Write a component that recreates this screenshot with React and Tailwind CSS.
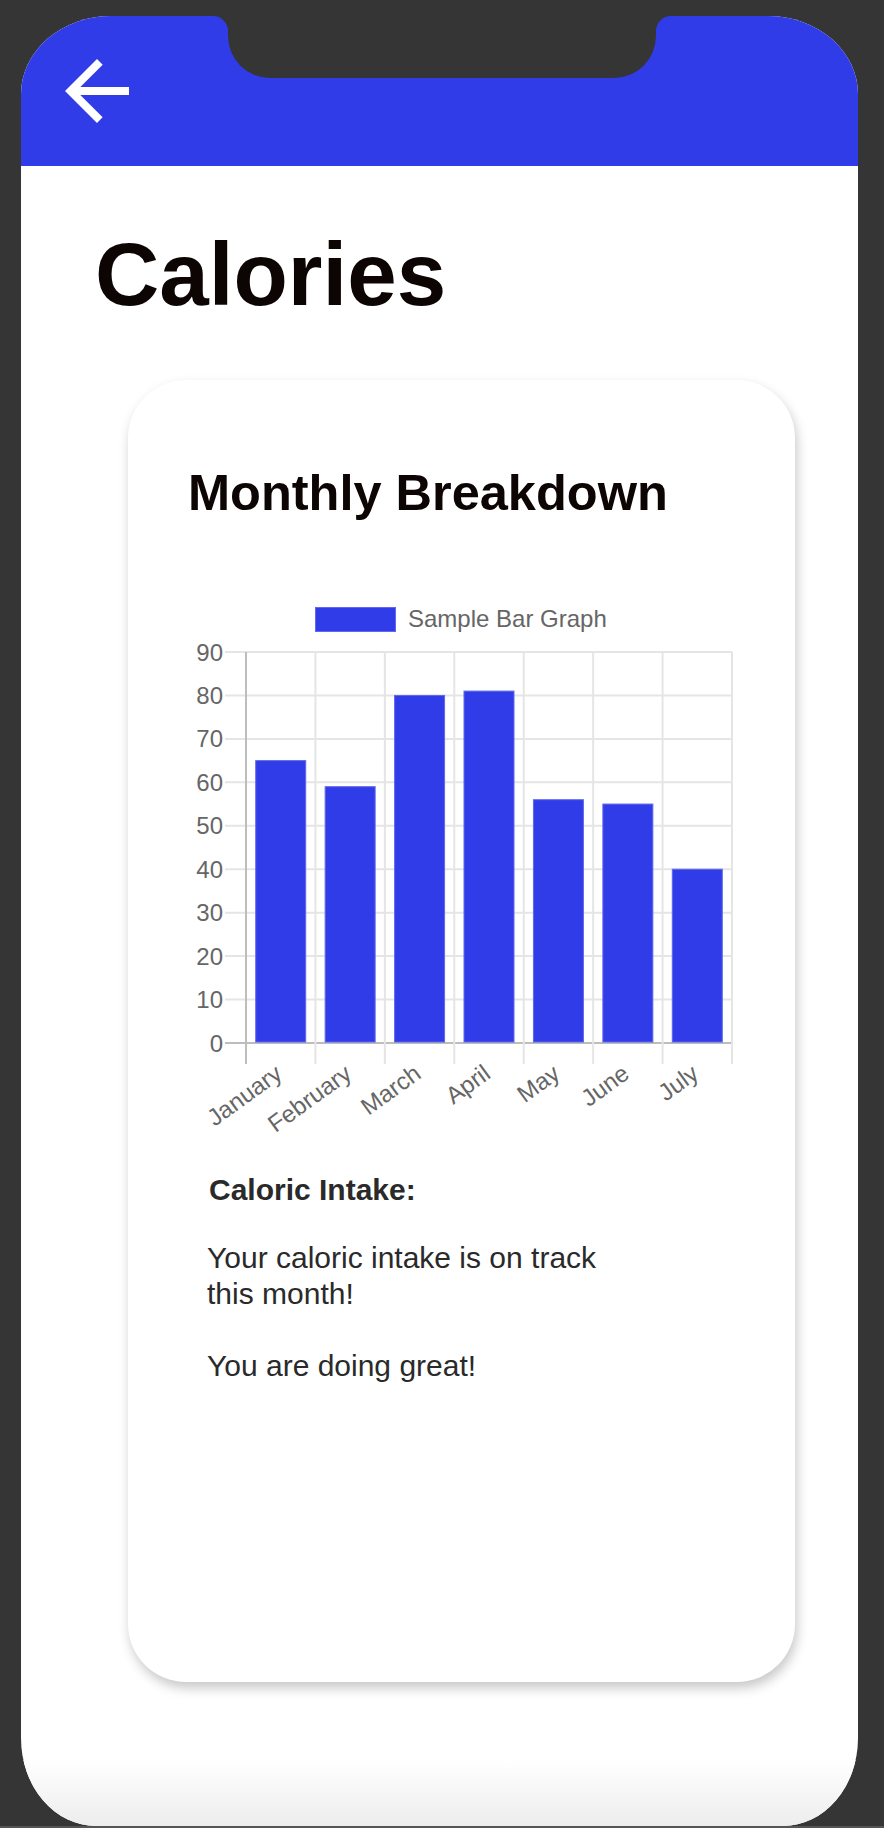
import React from 'react'

const data = [
  ['January', 65],
  ['February', 59],
  ['March', 80],
  ['April', 81],
  ['May', 56],
  ['June', 55],
  ['July', 40],
]

function BarChart() {
  const left = 86
  const right = 572
  const top = 61
  const zero = 452
  const step = (zero - top) / 9
  const cat = (right - left) / 7
  const ticks = [0, 1, 2, 3, 4, 5, 6, 7, 8, 9]

  return (
    <svg width="590" height="560" viewBox="0 0 590 560" className="block overflow-visible">
      {/* legend */}
      <rect x="155.5" y="16.5" width="80" height="24" fill="#303ce7" stroke="#5f68ee" strokeWidth="1" />
      <text x="248" y="36" fontSize="24" fill="#666">Sample Bar Graph</text>

      {/* horizontal grid */}
      {ticks.map((i) => {
        const y = zero - i * step
        return (
          <g key={i}>
            <line x1="65" x2={right} y1={y} y2={y} stroke={i === 0 ? '#bdbdbd' : '#e5e5e5'} strokeWidth="2" />
            <text x="63" y={y} fontSize="24" fill="#666" textAnchor="end" dominantBaseline="central">
              {i * 10}
            </text>
          </g>
        )
      })}

      {/* vertical grid */}
      {[0, 1, 2, 3, 4, 5, 6, 7].map((i) => {
        const x = left + i * cat
        return (
          <line key={i} x1={x} x2={x} y1={top} y2={zero + 21} stroke={i === 0 ? '#bdbdbd' : '#e5e5e5'} strokeWidth="2" />
        )
      })}

      {/* bars */}
      {data.map(([m, v], i) => {
        const cx = left + cat * (i + 0.5)
        const y = zero - (v * step) / 10
        return (
          <rect key={m} x={cx - 25} y={y} width="50" height={zero - y - 1} fill="#303ce7" stroke="#5f68ee" strokeWidth="1" />
        )
      })}

      {/* x labels */}
      {data.map(([m], i) => {
        const cx = left + cat * (i + 0.5)
        return (
          <text
            key={m}
            transform={`translate(${cx - 2} 479) rotate(-36)`}
            fontSize="24"
            fill="#666"
            textAnchor="end"
            dominantBaseline="central"
          >
            {m}
          </text>
        )
      })}
    </svg>
  )
}

export default function App() {
  return (
    <div className="w-full h-[1828px] bg-[#353535] pt-[16px] font-['Liberation_Sans',Arial,sans-serif] overflow-hidden">
      <div className="relative ml-[21px] w-[837px] h-[1810px] bg-white overflow-hidden flex flex-col rounded-tl-[90px_78px] rounded-tr-[90px_78px] rounded-bl-[75px_88px] rounded-br-[75px_88px]">
        {/* header */}
        <div className="h-[150px] bg-[#303ce7] pl-[28px] pt-[27px] shrink-0">
          <svg width="96" height="96" viewBox="0 0 24 24" fill="#fff">
            <path d="M20 11H7.83l5.59-5.59L12 4l-8 8 8 8 1.41-1.41L7.83 13H20v-2z" />
          </svg>
        </div>

        {/* notch */}
        <svg className="absolute top-0 left-[192px]" width="458" height="62" viewBox="0 0 458 62">
          <path
            d="M0 0 A15 15 0 0 1 15 15 L15 20 A42 42 0 0 0 57 62 L401 62 A42 42 0 0 0 443 20 L443 15 A15 15 0 0 1 458 0 Z"
            fill="#353535"
          />
        </svg>

        <h1 className="mt-[64px] pl-[74px] text-[89px] leading-none font-bold text-[#0d0404]">Calories</h1>

        {/* card */}
        <div className="mt-[61px] ml-[107px] w-[667px] h-[1302px] shrink-0 bg-white rounded-[58px] shadow-[2px_6px_12px_rgba(0,0,0,0.22)] pt-[88px]">
          <h2 className="pl-[60px] text-[50.5px] leading-none font-bold text-[#0d0404]">Monthly Breakdown</h2>

          <div className="mt-[72px] ml-[32px] h-[530px]">
            <BarChart />
          </div>

          <div className="mt-[51px] ml-[81px] text-[30px] leading-[36px] text-[#2a2a2a]">
            <p className="font-bold">Caloric Intake:</p>
            <p className="mt-[32px] -ml-[2px]">
              Your caloric intake is on track
              <br />
              this month!
              <br />
              <br />
              You are doing great!
            </p>
          </div>
        </div>

        <div className="flex-1" />
        <div className="h-[66px] shrink-0 bg-linear-to-b from-white to-[#ededed]" />
      </div>
      <div className="h-[2px] bg-[#555]" />
    </div>
  )
}
